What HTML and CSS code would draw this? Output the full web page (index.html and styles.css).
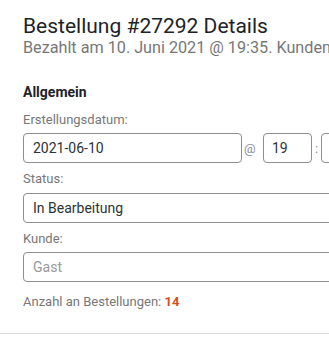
FILE: index.html
```html
<!DOCTYPE html>
<html lang="de">
<head>
<meta charset="utf-8">
<link rel="stylesheet" href="styles.css">
</head>
<body>
<div class="panel">
  <h2 class="heading">Bestellung #27292 Details</h2>
  <p class="meta">Bezahlt am 10. Juni 2021 @ 19:35. Kunden-IP: 127.0.0.1</p>
  <div class="column">
    <h3 class="section">Allgemein</h3>
    <div class="field field-date">
      <label class="label">Erstellungsdatum:</label>
      <div class="date-row">
        <div class="input date">2021-06-10</div>
        <span class="sep at">@</span>
        <div class="input hour">19</div>
        <span class="sep colon">:</span>
        <div class="input minute">35</div>
      </div>
    </div>
    <div class="field field-status">
      <label class="label">Status:</label>
      <div class="input wide">In Bearbeitung</div>
    </div>
    <div class="field field-customer">
      <label class="label">Kunde:</label>
      <div class="input wide placeholder">Gast</div>
    </div>
    <p class="count">Anzahl an Bestellungen: <strong class="num">14</strong></p>
  </div>
</div>
</body>
</html>
```
FILE: styles.css
```css
html, body {
  margin: 0;
  padding: 0;
  background: #ffffff;
  overflow: hidden;
}
body {
  font-family: Roboto, "Liberation Sans", sans-serif;
  color: #3c434a;
  width: 329px;
  height: 337px;
}
.panel {
  box-sizing: border-box;
  padding: 14px 0 0 23px;
  border-bottom: 1px solid #dcdcde;
  height: 334px;
  white-space: nowrap;
  overflow: hidden;
}
.heading {
  margin: 0;
  font-size: 21px;
  font-weight: 400;
  line-height: 25px;
  color: #1d2327;
}
.meta {
  margin: 0;
  font-size: 16.2px;
  line-height: 18px;
  color: #777777;
}
.column {
  padding-top: 26px;
}
.section {
  margin: 0 0 11px;
  font-size: 14px;
  font-weight: 700;
  line-height: 18px;
  color: #1d2327;
}
.field {
  margin-bottom: 8px;
}
.label {
  display: block;
  font-size: 13px;
  line-height: 16px;
  color: #777777;
  margin-bottom: 5px;
}
.field-status .label {
  margin-bottom: 6px;
}
.date-row {
  display: flex;
  align-items: center;
}
.input {
  box-sizing: border-box;
  height: 30px;
  border: 1px solid #8c8f94;
  border-radius: 4px;
  padding: 0 9px;
  font-size: 14px;
  line-height: 28px;
  color: #2c3338;
  background: #ffffff;
  flex: none;
}
.date {
  width: 219px;
}
.hour {
  width: 49px;
  padding-left: 8px;
}
.minute {
  width: 49px;
  padding-left: 12px;
}
.sep {
  flex: none;
  font-size: 13px;
  color: #8c8f94;
  box-sizing: border-box;
}
.at {
  width: 21px;
  padding-left: 2px;
}
.colon {
  width: 9px;
  text-align: center;
}
.wide {
  width: 340px;
}
.placeholder {
  color: #999999;
}
.count {
  margin: 12px 0 0;
  font-size: 13px;
  line-height: 16px;
  color: #777777;
}
.num {
  color: #d54e21;
  font-weight: 700;
}
```
